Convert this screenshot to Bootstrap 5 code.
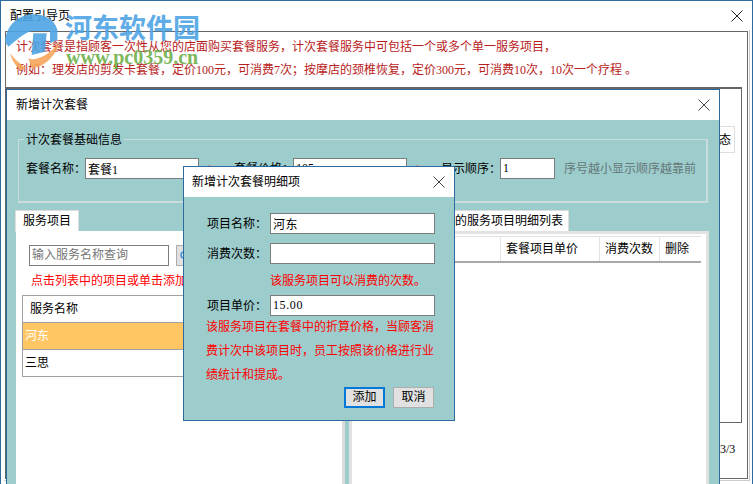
<!DOCTYPE html>
<html lang="zh-CN">

<head>
  <meta charset="UTF-8" />
  <meta name="viewport" content="width=device-width, initial-scale=1" />
  <title>配置引导页</title>
  <link href="https://cdn.jsdelivr.net/npm/bootstrap@5.3.0/dist/css/bootstrap.min.css" rel="stylesheet" />
  <style>
    html, body { height: 100%; }
    body { margin: 0; overflow: hidden; background: #fff; font: 12px/16px "Liberation Serif", "Noto Sans CJK SC", sans-serif; color: #000; }
    .desk { position: relative; width: 753px; height: 484px; overflow: hidden; }

    /* 窗口 */
    .win { position: absolute; background: #9ccccc; border: 1px solid #2d6a9f; }
    .win-main { left: 0; top: 0; width: 753px; height: 490px; background: #fff; }
    .win-add { left: 6px; top: 89px; width: 714px; height: 400px; }
    .win-item { left: 183px; top: 166px; width: 272px; height: 255px; }
    .win-head { background: #fff; display: flex; align-items: center; justify-content: space-between; }
    .win-add .win-head { height: 30px; padding: 0 9px; }
    .win-item .win-head { height: 30px; padding: 0 9px 0 8px; }
    .win-main .win-head { height: 30px; padding: 0 9px; }
    .win-close { display: block; width: 12px; height: 12px; }

    /* 背后的窗口 */
    .frame-out { position: absolute; left: 5px; top: 31px; width: 743px; height: 448px; border: 1px solid #666; }
    .notice { height: 57px; padding: 4px 10px 2px; color: #b81c1c; width: 736px; border-bottom: 2px solid #666; line-height: 23px; }
    .frame-in { position: absolute; left: 5px; top: 57px; width: 731px; height: 334px; border: 1px solid #666; border-top: 0; }
    .state-btn { position: absolute; left: 719px; top: 126px; width: 16px; height: 27px; border: 1px solid #ddd; border-left: 0; display: flex; align-items: center; }
    .page-no { position: absolute; left: 720px; top: 441px; }
    .frame-low { position: absolute; left: 4px; top: 30px; width: 746px; height: 451px; border: 1px solid #ccc; border-top: 0; border-left: 0; }

    /* 基础信息 */
    .info-box { position: absolute; left: 11px; top: 49px; width: 690px; height: 64px; border: 1px solid #ccdcdc; border-width: 1px 2px 2px 1px; }
    .info-title { position: absolute; left: 5px; top: -8px; background: #9ccccc; padding: 0 2px; }
    .info-row { display: flex; align-items: center; position: absolute; left: 7px; top: 18px; height: 21px; }
    .info-lab { width: 59px; flex: none; white-space: nowrap; }
    .txt-in { display: block; background: #fff; border: 1px solid #7c7c7c; height: 21px; padding: 0 2px; font: inherit; line-height: 18px; color: #000; border-radius: 0; }
    .hint-star { color: #e01010; width: 35px; padding-left: 8px; font-size: 10px; }
    .hint-star-last { width: 34px; }
    .hint-gray { color: #667878; margin-left: 9px; }

    /* 标签页 */
    .tab-left, .tab-right { position: absolute; top: 120px; height: 22px; background: #fff; border: 1px solid #dcdcdc; border-bottom: 0; line-height: 20px; }
    .tab-left { left: 8px; width: 64px; padding-left: 7px; }
    .tab-right { left: 343px; width: 219px; padding-left: 104px; }
    .pane-left { position: absolute; left: 9px; top: 141px; width: 329px; height: 270px; background: #fff; border-right: 3px solid #dcdcdc; }
    .pane-right { position: absolute; left: 342px; top: 141px; width: 360px; height: 270px; background: #fff; border: 3px solid #e2e2e2; border-width: 3px 3px 0 3px; }

    .find-in { position: absolute; left: 13px; top: 14px; width: 140px; height: 21px; border: 1px solid #7c7c7c; padding: 0 2px; color: #777; line-height: 19px; }
    .find-btn { position: absolute; left: 160px; top: 14px; width: 30px; height: 21px; background: #e1e1e1; border: 1px solid #adadad; padding: 5px 0 0 3px; }
    .find-btn svg { display: block; }
    .find-tip { position: absolute; left: 15px; top: 42px; color: #f00; white-space: nowrap; }
    .svc-list { position: absolute; left: 6px; top: 64px; width: 322px; border: 1px solid #a0a0a0; }
    .svc-row { height: 27px; display: flex; align-items: center; padding-left: 2px; border-bottom: 1px solid #a0a0a0; }
    .svc-row:last-child { border-bottom: 0; height: 26px; }
    .svc-head { padding-left: 7px; }
    .svc-on { background: #ffc663; color: #fff; }

    .det-head { position: absolute; left: 0; top: 2px; width: 349px; height: 27px; display: flex; border-top: 1px solid #e2e2e2; border-bottom: 2px solid #a8a8a8; }
    .det-cell { border-right: 1px solid #e2e2e2; display: flex; align-items: center; padding-left: 5px; white-space: nowrap; }

    /* 明细项 */
    .item-body { padding: 16px 19px 0 23px; }
    .item-row { display: flex; align-items: center; height: 21px; margin-bottom: 9px; }
    .item-lab { width: 63px; flex: none; white-space: nowrap; }
    .item-in { width: 165px; letter-spacing: .6px; }
    .item-tip { color: #f00; margin: -2px 0 3px 63px; height: 21px; line-height: 21px; }
    .item-note { color: #f00; line-height: 24px; margin: -10px -2px 0 -1px; width: 232px; }
    .item-btns { position: absolute; right: 20px; top: 220px; gap: 8px; }
    .win-btn { width: 41px; height: 21px; padding: 0; background: #e1e1e1; border: 1px solid #adadad; border-radius: 0; font: inherit; line-height: 17px; color: #000; }
    .win-btn-on { border: 2px solid #0078d7; }

    /* 水印 */
    .mark-wrap { position: absolute; left: 0; top: 5px; width: 210px; height: 65px; pointer-events: none; }
    .mark-logo { position: absolute; left: 0; top: 0; }
    .mark-name { position: absolute; left: 65px; top: 5px; font: 700 27px/34px "Noto Sans CJK SC", serif; color: #4ea4e4; opacity: .9; white-space: nowrap; }
    .mark-url { position: absolute; left: 66px; top: 42px; font: 700 20px/20px "Liberation Serif", serif; color: #6fb04a; opacity: .9; white-space: nowrap; }
  </style>
</head>

<body>
  <div class="desk">

    <!-- 配置引导页 -->
    <div class="win win-main">
      <div class="win-head">
        <span>配置引导页</span>
        <svg class="win-close" viewBox="0 0 12 12"><path d="M.5.5l11 11M11.5.5l-11 11" stroke="#222" fill="none"/></svg>
      </div>
    </div>
    <div class="frame-low"></div>
    <div class="frame-out">
      <div class="notice">
        计次套餐是指顾客一次性从您的店面购买套餐服务，计次套餐服务中可包括一个或多个单一服务项目，<br />
        例如：理发店的剪发卡套餐，定价100元，可消费7次；按摩店的颈椎恢复，定价300元，可消费10次，10次一个疗程 。
      </div>
      <div class="frame-in"></div>
    </div>
    <div class="state-btn">态</div>
    <div class="page-no">3/3</div>

    <!-- 新增计次套餐 -->
    <div class="win win-add">
      <div class="win-head">
        <span>新增计次套餐</span>
        <svg class="win-close" viewBox="0 0 12 12"><path d="M.5.5l11 11M11.5.5l-11 11" stroke="#444" fill="none"/></svg>
      </div>
      <div class="info-box">
        <span class="info-title">计次套餐基础信息</span>
        <div class="info-row">
          <span class="info-lab">套餐名称：</span>
          <input class="txt-in" style="width:114px" value="套餐1" />
          <span class="hint-star">*</span>
          <span class="info-lab">套餐价格：</span>
          <input class="txt-in" style="width:114px" value="105" />
          <span class="hint-star hint-star-last">*</span>
          <span class="info-lab">显示顺序：</span>
          <input class="txt-in" style="width:55px" value="1" />
          <span class="hint-gray">序号越小显示顺序越靠前</span>
        </div>
      </div>
      <div class="tab-left">服务项目</div>
      <div class="tab-right">的服务项目明细列表</div>
      <div class="pane-left">
        <div class="find-in">输入服务名称查询</div>
        <div class="find-btn">
          <svg width="10" height="10" viewBox="0 0 10 10"><circle cx="4" cy="4" r="3" fill="none" stroke="#3d8fd6" stroke-width="1.4"/><path d="M6 6l3 3" stroke="#3d8fd6" stroke-width="1.4"/></svg>
        </div>
        <div class="find-tip">点击列表中的项目或单击添加</div>
        <div class="svc-list">
          <div class="svc-row svc-head">服务名称</div>
          <div class="svc-row svc-on">河东</div>
          <div class="svc-row">三思</div>
        </div>
      </div>
      <div class="pane-right">
        <div class="det-head">
          <div class="det-cell" style="width:149px"></div>
          <div class="det-cell" style="width:99px">套餐项目单价</div>
          <div class="det-cell" style="width:60px">消费次数</div>
          <div class="det-cell" style="width:41px;border-right:0">删除</div>
        </div>
      </div>
    </div>

    <!-- 新增计次套餐明细项 -->
    <div class="win win-item">
      <div class="win-head">
        <span>新增计次套餐明细项</span>
        <svg class="win-close" viewBox="0 0 12 12"><path d="M.5.5l11 11M11.5.5l-11 11" stroke="#444" fill="none"/></svg>
      </div>
      <div class="item-body">
        <div class="item-row"><span class="item-lab">项目名称：</span><input class="txt-in item-in" value="河东" /></div>
        <div class="item-row"><span class="item-lab">消费次数：</span><input class="txt-in item-in" value="" /></div>
        <div class="item-tip">该服务项目可以消费的次数。</div>
        <div class="item-row"><span class="item-lab">项目单价：</span><input class="txt-in item-in" value="15.00" /></div>
        <div class="item-note">该服务项目在套餐中的折算价格，当顾客消费计次中该项目时，员工按照该价格进行业绩统计和提成。</div>
      </div>
      <div class="item-btns d-flex">
        <button type="button" class="win-btn win-btn-on">添加</button>
        <button type="button" class="win-btn">取消</button>
      </div>
    </div>

    <!-- 水印 -->
    <div class="mark-wrap">
      <svg class="mark-logo" width="80" height="65" viewBox="0 0 240 195">
        <path d="M15 110C20 60 55 28 100 28C135 28 165 45 172 75L172 105L150 115L150 78L95 78C70 85 50 105 25 125Z" fill="#4ea4e4" opacity=".9"/>
        <path d="M100 85L140 85L135 140L95 150Z" fill="#4ea4e4" opacity=".9"/>
        <path d="M30 145C45 165 60 175 78 190L60 195C45 180 35 165 30 145Z" fill="#f5a55a" opacity=".9"/>
        <path d="M85 160C105 170 150 150 178 110C170 150 135 185 95 190Z" fill="#f5a55a" opacity=".9"/>
      </svg>
      <div class="mark-name">河东软件园</div>
      <div class="mark-url">www.pc0359.cn</div>
    </div>

  </div>

  <script src="https://cdn.jsdelivr.net/npm/bootstrap@5.3.0/dist/js/bootstrap.bundle.min.js"></script>
</body>

</html>
